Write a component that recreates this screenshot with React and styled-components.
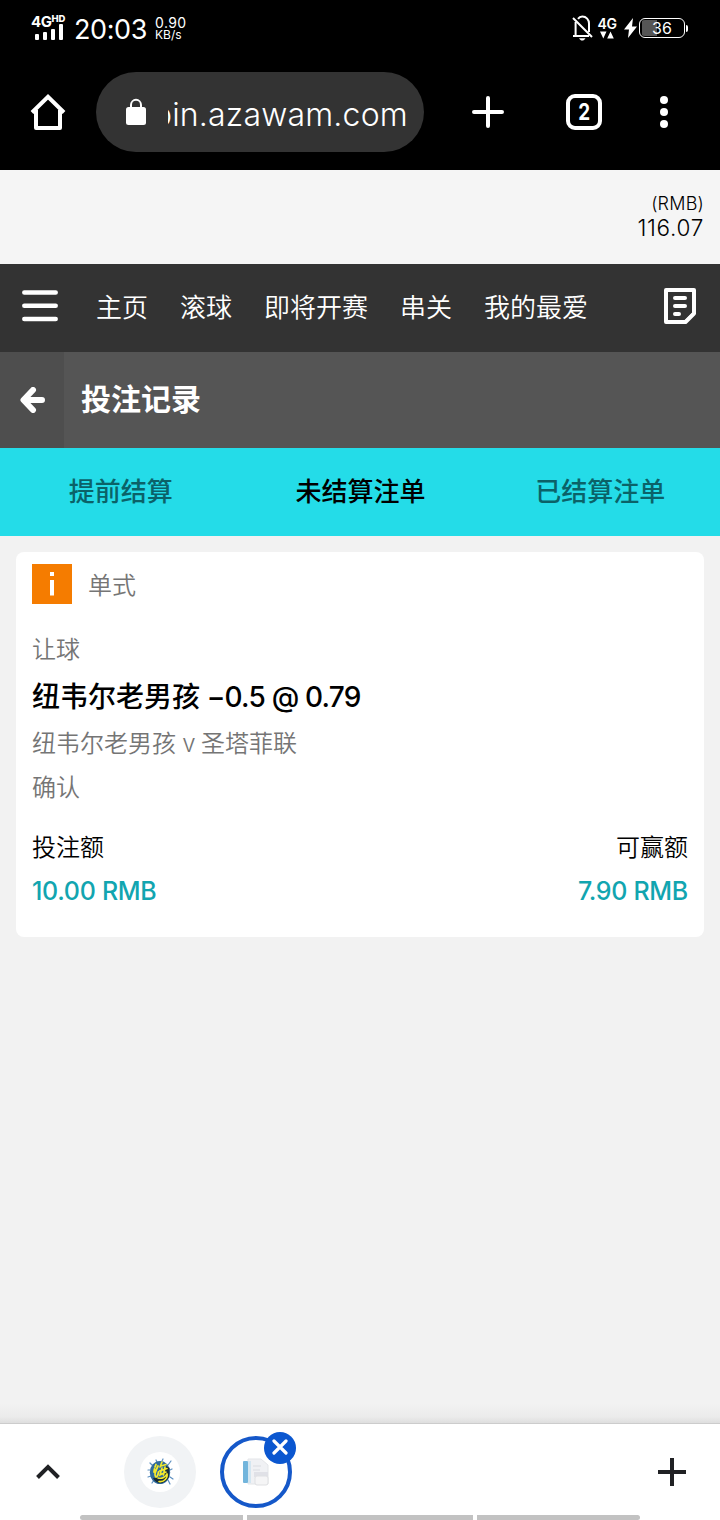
import React from 'react'
import styled, { createGlobalStyle } from 'styled-components'

const GlobalStyle = createGlobalStyle`
  * {
    box-sizing: border-box;
  }

  body {
    margin: 0;
    background: #f2f2f2;
    font-family: Inter, 'Noto Sans CJK SC', sans-serif;
  }

  svg {
    display: block;
    flex: none;
  }
`

const Screen = styled.div`
  width: 720px;
  height: 1520px;
  display: flex;
  flex-direction: column;
  overflow: hidden;
  background: #f2f2f2;
`

const Text = styled.span`
  display: block;
  flex: none;
  white-space: nowrap;
  font-size: ${p => p.$size}px;
  line-height: ${p => p.$line || p.$size}px;
  font-weight: ${p => p.$weight || 400};
  letter-spacing: ${p => p.$track || 0}px;
  color: ${p => p.$color || '#000'};
`

const Tight = styled.span`
  letter-spacing: ${p => p.$track}px;
`

const StatusBar = styled.div`
  height: 56px;
  padding: 0 32px 0 31px;
  display: flex;
  justify-content: space-between;
  align-items: center;
  background: #000;
`

const StatusGroup = styled.div`
  display: flex;
  align-items: center;
`

const Signal = styled.div`
  width: 36px;
  margin-right: 7px;
  padding-bottom: 2px;
  display: flex;
  flex-direction: column;
`

const SignalLabel = styled.div`
  display: flex;
  align-items: flex-start;
  height: 10px;
`

const Clock = styled(Text)`
  padding-top: 3px;
`

const Speed = styled.div`
  margin-left: 8px;
  padding-top: 1px;
`

const Network = styled.div`
  width: 20px;
  margin: 0 7px 0 4px;
  padding-bottom: 1px;
  display: flex;
  flex-direction: column;
  align-items: center;
`

const Battery = styled.div`
  width: 46px;
  height: 20px;
  margin-left: 2px;
  display: flex;
  align-items: center;
  justify-content: center;
  border: 1.5px solid #fff;
  border-radius: 6px;
  background: linear-gradient(to right, transparent 2px, #555 2px, #555 17px, transparent 17px) content-box;
  padding: 1px 0;
`

const BatteryTip = styled.div`
  width: 2px;
  height: 7px;
  margin-left: 1px;
  border-radius: 0 2px 2px 0;
  background: #fff;
`

const Toolbar = styled.div`
  height: 114px;
  padding: 16px 36px 18px 30px;
  display: flex;
  align-items: center;
  background: #000;
`

const AddressBar = styled.div`
  width: 328px;
  height: 80px;
  margin: 0 48px 0 30px;
  padding: 0 16px 0 29px;
  display: flex;
  align-items: center;
  justify-content: space-between;
  border-radius: 40px;
  background: #333;
`

const Address = styled.div`
  width: 240px;
  padding-top: 5px;
  display: flex;
  justify-content: flex-end;
  overflow: hidden;
`

const TabCount = styled.div`
  width: 36px;
  height: 36px;
  margin: 0 58px 0 62px;
  display: flex;
  align-items: center;
  justify-content: center;
  border: 4px solid #fff;
  border-radius: 9px;
`

const Condensed = styled(Text)`
  transform: scaleX(0.82);
`

const Balance = styled.div`
  height: 94px;
  padding: 22px 16px 0;
  display: flex;
  flex-direction: column;
  align-items: flex-end;
  background: #f5f5f5;
`

const Nav = styled.nav`
  height: 88px;
  padding: 0 24px 4px 22px;
  display: flex;
  align-items: center;
  background: #333;
`

const NavLinks = styled.div`
  flex: 1;
  margin-left: 38px;
  padding-top: 4px;
  display: flex;
  gap: 32px;
`

const TitleBar = styled.header`
  height: 96px;
  display: flex;
  align-items: center;
  background: #555;
`

const BackButton = styled.div`
  width: 64px;
  height: 96px;
  margin-right: 17px;
  padding-left: 2px;
  display: flex;
  align-items: center;
  justify-content: center;
  background: #4e4e4e;
`

const Title = styled(Text)`
  padding-bottom: 2px;
`

const Tabs = styled.div`
  height: 88px;
  padding: 0 0 1px 1px;
  display: grid;
  grid-template-columns: repeat(3, 1fr);
  place-items: center;
  background: #24dce8;
`

const Content = styled.main`
  flex: 1;
  padding: 16px;
  background: linear-gradient(to top, #dedede, #ebebeb 6px, #f2f2f2 20px);
`

const Card = styled.section`
  height: 385px;
  padding: 12px 16px;
  border-radius: 8px;
  background: #fff;
`

const CardHead = styled.div`
  height: 40px;
  margin-bottom: 27px;
  display: flex;
  align-items: center;
  gap: 16px;
`

const BetType = styled(Text)`
  padding-top: 4px;
`

const Row = styled.div`
  display: flex;
  justify-content: space-between;
  margin-top: ${p => p.$top || 0}px;
`

const BottomBar = styled.footer`
  height: 97px;
  display: flex;
  flex-direction: column;
  justify-content: space-between;
  border-top: 1px solid #ccc;
  background: #fff;
`

const BottomRow = styled.div`
  height: 96px;
  padding: 0 34px 0 36px;
  display: flex;
  align-items: center;
`

const TabGroup = styled.div`
  flex: 1;
  margin-left: 64px;
  display: flex;
  gap: 24px;
`

const TabBubble = styled.div`
  position: relative;
  width: 72px;
  height: 72px;
  display: flex;
  align-items: center;
  justify-content: center;
  border-radius: 50%;
  border: ${p => p.$active ? '4px solid #1558c9' : 'none'};
  background: ${p => p.$active ? '#fff' : '#f1f3f5'};
`

const Favicon = styled.div`
  width: 40px;
  height: 40px;
  display: flex;
  align-items: center;
  justify-content: center;
  border-radius: 50%;
  background: #fff;
`

const CloseBadge = styled.div`
  position: absolute;
  top: -8px;
  right: -8px;
  width: 32px;
  height: 32px;
  padding-bottom: 2px;
  display: flex;
  align-items: center;
  justify-content: center;
  border-radius: 50%;
  background: #0b57d0;
`

const SystemNav = styled.div`
  height: 5px;
  margin: -9px 80px 0;
  display: grid;
  grid-template-columns: 163px 226px 163px;
  gap: 4px;
`

const SystemKey = styled.div`
  background: #c2c2c2;
  border-radius: ${p => p.$radius || 0};
`

const SignalBars = () => (
  <svg width="34" height="16" viewBox="0 0 34 16" fill="#fff">
    <rect x="4" y="10" width="4" height="6" rx="1" />
    <rect x="12" y="8" width="4" height="8" rx="1" />
    <rect x="20" y="5" width="4" height="11" rx="1" />
    <rect x="28" y="0" width="4" height="16" rx="1" />
  </svg>
)

const MutedBell = () => (
  <svg width="21" height="26" viewBox="0 0 21 26" fill="none" stroke="#fff" strokeWidth="2">
    <path d="M3.600 7V20M6 3.800C7 2.400 8.600 1.600 10.300 1.600C14.300 1.600 17 4.600 17 8.500V17" />
    <path d="M1 21H17M1 3L20 22" />
    <path d="M7 23.200H13.500C12.500 24.700 11.500 25.500 10.200 25.500S8 24.700 7 23.200Z" fill="#fff" stroke="none" />
  </svg>
)

const Arrows = () => (
  <svg width="14" height="8" viewBox="0 0 14 8" fill="#fff">
    <path d="M0 .5H6.500L3.300 7.500ZM7.200 7.500H13.800L10.500 .5Z" />
  </svg>
)

const Bolt = () => (
  <svg width="13" height="20" viewBox="0 0 13 20" fill="#fff">
    <path d="M9 0L0 11.500H5L4 20L13 8.500H8Z" />
  </svg>
)

const HomeIcon = () => (
  <svg width="36" height="38" viewBox="0 0 36 38" fill="none" stroke="#fff" strokeWidth="4" strokeLinejoin="round">
    <path d="M2 19.500L18 3.800L34 19.500" strokeLinejoin="miter" />
    <path d="M6 17V35H30V17" />
  </svg>
)

const LockIcon = () => (
  <svg width="22" height="28" viewBox="0 0 22 28">
    <rect x="1" y="9" width="20" height="18" rx="2.500" fill="#fff" />
    <path d="M6 10V7A5 5.200 0 0 1 16 7V10" fill="none" stroke="#fff" strokeWidth="2" />
  </svg>
)

const PlusIcon = () => (
  <svg width="32" height="32" viewBox="0 0 32 32" stroke="#fff" strokeWidth="4" strokeLinecap="round">
    <path d="M16 2V30M2 16H30" />
  </svg>
)

const AddIcon = () => (
  <svg width="28" height="28" viewBox="0 0 28 28" stroke="#202124" strokeWidth="4">
    <path d="M14 0V28M0 14H28" />
  </svg>
)

const DotsIcon = () => (
  <svg width="8" height="32" viewBox="0 0 8 32" fill="#fff">
    <circle cx="4" cy="4" r="4" />
    <circle cx="4" cy="16" r="4" />
    <circle cx="4" cy="28" r="4" />
  </svg>
)

const MenuIcon = () => (
  <svg width="36" height="32" viewBox="0 0 36 32" stroke="#fff" strokeWidth="4.500" strokeLinecap="round">
    <path d="M2.300 2.500H33.700M2.300 15.700H33.700M2.300 29H33.700" />
  </svg>
)

const SlipIcon = () => (
  <svg width="32" height="36" viewBox="0 0 32 36" fill="none" stroke="#fff" strokeWidth="4">
    <path d="M2 2H30V25.500L21.500 34H2Z" strokeLinejoin="round" />
    <path d="M11 10H21M11 18H21M11 26H15" strokeLinecap="round" />
    <path d="M20 33L29 24V27L23 33Z" fill="#fff" stroke="none" />
  </svg>
)

const BackIcon = () => (
  <svg width="26" height="26" viewBox="0 0 26 26" fill="none" stroke="#fff" strokeWidth="6" strokeLinecap="round" strokeLinejoin="round">
    <path d="M13 3L3.500 13L13 23M4 13H22" />
  </svg>
)

const InfoIcon = () => (
  <svg width="40" height="40" viewBox="0 0 40 40">
    <rect width="40" height="40" fill="#f57c00" />
    <path d="M18 8H22V12H18ZM18 16H22V31.500H18Z" fill="#fff" />
  </svg>
)

const ChevronIcon = () => (
  <svg width="24" height="16" viewBox="0 0 24 16" fill="none" stroke="#202124" strokeWidth="4">
    <path d="M1.500 13.500L12 3L22.500 13.500" />
  </svg>
)

const SplashIcon = () => (
  <svg width="28" height="28" viewBox="0 0 28 28" fill="none" strokeLinecap="round">
    <path d="M6 7L4 5M4 12H2M5 18L2 19M8 22L6 25M22 22L24 26M24 19L27 21M24 12L26 11M22 7L25 3M16 3L17 1M11 4L10 2" stroke="#5c8fc0" strokeWidth="1.200" />
    <ellipse cx="14" cy="14.500" rx="10.200" ry="11.500" fill="#2f6b9c" />
    <path d="M7 20C10 27 19 27 23 19L23.500 10L20 8L18 19Z" fill="#182b38" />
    <path d="M10 6.500L9 9M8.500 11L8 14M12 8C10 12 8 17 9.500 18.500S12 17 12.500 14" stroke="#f4ea2c" strokeWidth="1.800" />
    <path d="M16 4L14 9M15 8L20 6.500M16 10L14 17L20 14M19 9L17.500 17M13.500 13L21 10.500" stroke="#f4ea2c" strokeWidth="1.600" />
    <path d="M12 20C16 21 20 19 21 15.500C22 20 18 24.500 13 23.500" stroke="#f4ea2c" strokeWidth="1.600" />
  </svg>
)

const PaperIcon = () => (
  <svg width="28" height="28" viewBox="0 0 28 28">
    <path d="M6 1H19L26 7V26H6Z" fill="#f0f1f4" stroke="#e3e5e8" />
    <rect x="1" y="3" width="5" height="22" rx="1" fill="#72b5dc" />
    <rect x="6" y="3" width="3" height="22" fill="#d3e6f1" />
    <path d="M11 8H19M11 12H18" stroke="#dadce1" />
    <rect x="12" y="14" width="14" height="5" fill="#e0e1e7" />
    <rect x="13" y="18" width="13" height="9" rx="2" fill="#f5f5f6" stroke="#dfe0e3" />
  </svg>
)

const CloseIcon = () => (
  <svg width="16" height="16" viewBox="0 0 16 16" stroke="#fff" strokeWidth="3.200" strokeLinecap="round">
    <path d="M2 2L14 14M14 2L2 14" />
  </svg>
)

const links = ['主页', '滚球', '即将开赛', '串关', '我的最爱']

function App () {
  return (
    <Screen>
      <GlobalStyle />
      <StatusBar>
        <StatusGroup>
          <Signal>
            <SignalLabel>
              <Text $size={15} $weight={700} $track={-0.5} $color="#fff">4G</Text>
              <Text $size={9.5} $line={9} $weight={800} $color="#fff">HD</Text>
            </SignalLabel>
            <SignalBars />
          </Signal>
          <Clock $size={27} $line={30} $track={-0.4} $color="#fff">20:03</Clock>
          <Speed>
            <Text $size={14} $line={13} $track={0.4} $color="#fff">0.90</Text>
            <Text $size={12} $line={12} $color="#fff">KB/s</Text>
          </Speed>
        </StatusGroup>
        <StatusGroup>
          <MutedBell />
          <Network>
            <Text $size={14} $line={15} $weight={600} $track={-0.5} $color="#fff">4G</Text>
            <Arrows />
          </Network>
          <Bolt />
          <Battery>
            <Text $size={16} $color="#fff">36</Text>
          </Battery>
          <BatteryTip />
        </StatusGroup>
      </StatusBar>

      <Toolbar>
        <HomeIcon />
        <AddressBar>
          <LockIcon />
          <Address>
            <Text $size={32} $line={42} $weight={300} $track={0.2} $color="#fff">bin.azawam.com</Text>
          </Address>
        </AddressBar>
        <PlusIcon />
        <TabCount>
          <Condensed $size={23} $weight={700} $color="#fff">2</Condensed>
        </TabCount>
        <DotsIcon />
      </Toolbar>

      <Balance>
        <Text $size={18} $line={24} $weight={300} $track={0.2}>(RMB)</Text>
        <Text $size={22.5} $line={23} $weight={300} $track={0.7}>116.07</Text>
      </Balance>

      <Nav>
        <MenuIcon />
        <NavLinks>
          {links.map(label => (
            <Text key={label} $size={26} $line={36} $weight={350} $color="#fff">{label}</Text>
          ))}
        </NavLinks>
        <SlipIcon />
      </Nav>

      <TitleBar>
        <BackButton><BackIcon /></BackButton>
        <Title $size={30} $line={44} $weight={700} $color="#fff">投注记录</Title>
      </TitleBar>

      <Tabs>
        <Text $size={26} $line={36} $weight={500} $color="#0b6268">提前结算</Text>
        <Text $size={26} $line={36} $weight={500}>未结算注单</Text>
        <Text $size={26} $line={36} $weight={500} $color="#0b6268">已结算注单</Text>
      </Tabs>

      <Content>
        <Card>
          <CardHead>
            <InfoIcon />
            <BetType $size={24} $line={36} $weight={350} $color="#757575">单式</BetType>
          </CardHead>
          <Text $size={24} $line={38} $weight={350} $color="#757575">让球</Text>
          <Text $size={28} $line={56} $weight={500}>
            纽韦尔老男孩<Tight $track={-0.8}> −0.5 @ 0.79</Tight>
          </Text>
          <Text $size={24} $line={38} $weight={350} $color="#757575">
            纽韦尔老男孩<Tight $track={-0.6}> v </Tight>圣塔菲联
          </Text>
          <Text $size={24} $line={50} $weight={350} $color="#757575">确认</Text>
          <Row $top={17}>
            <Text $size={24} $line={36} $weight={350}>投注额</Text>
            <Text $size={24} $line={36} $weight={350}>可赢额</Text>
          </Row>
          <Row $top={7}>
            <Text $size={25} $line={36} $weight={500} $track={-0.3} $color="#12a5b0">10.00 RMB</Text>
            <Text $size={25} $line={36} $weight={500} $track={-0.3} $color="#12a5b0">7.90 RMB</Text>
          </Row>
        </Card>
      </Content>

      <BottomBar>
        <BottomRow>
          <ChevronIcon />
          <TabGroup>
            <TabBubble>
              <Favicon><SplashIcon /></Favicon>
            </TabBubble>
            <TabBubble $active>
              <PaperIcon />
              <CloseBadge><CloseIcon /></CloseBadge>
            </TabBubble>
          </TabGroup>
          <AddIcon />
        </BottomRow>
        <SystemNav>
          <SystemKey $radius="3px 0 0 3px" />
          <SystemKey />
          <SystemKey $radius="0 3px 3px 0" />
        </SystemNav>
      </BottomBar>
    </Screen>
  )
}

export default App
